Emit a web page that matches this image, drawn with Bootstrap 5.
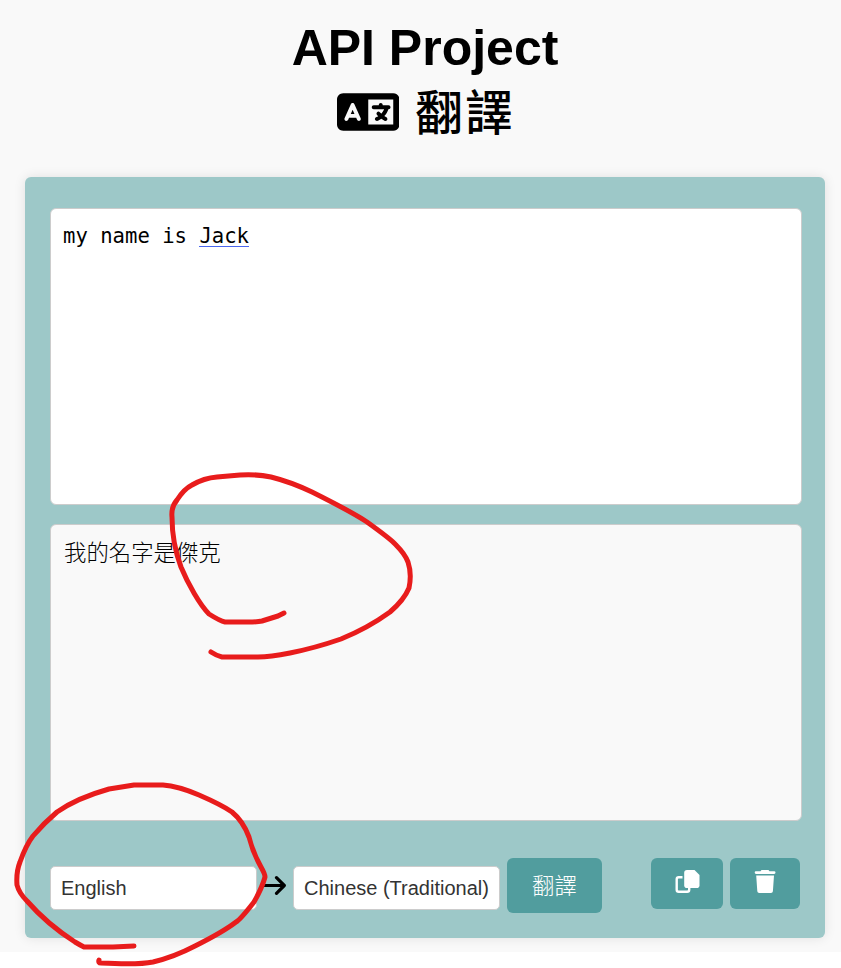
<!DOCTYPE html>
<html lang="zh-Hant">
<head>
<meta charset="utf-8">
<meta name="viewport" content="width=device-width, initial-scale=1">
<title>API Project 翻譯</title>
<link href="https://cdn.jsdelivr.net/npm/bootstrap@5.3.0/dist/css/bootstrap.min.css" rel="stylesheet">
<style>
body { min-height: 968px; background: #fff; color: #000; font-family: "Liberation Sans", "Noto Sans CJK TC", sans-serif; }
.page { height: 952px; padding: 16px 16px 0 25px; background: #f9f9f9; }
.title { font-size: 50px; line-height: 64px; font-weight: 700; height: 161px; color: #000; }
.title-zh { font: 500 47.5px/60px "Noto Sans CJK TC", sans-serif; letter-spacing: 2.5px; margin-left: 16px; padding-bottom: 4px; margin-right: -2px; }
.lang-icon { width: 62.5px; height: 50px; }
.panel { height: 761px; padding: 31px 23px 0 25px; background: #9dc8c8; border-radius: 6px; box-shadow: 0 0 12px rgba(0,0,0,.1); }
.pane { height: 297px; margin-bottom: 19px; padding: 12px; border: 1px solid #ccc; border-radius: 6px; }
.source { background: #fff; font: 20.6px/30px "DejaVu Sans Mono", monospace; }
.result { padding: 10.5px 13px; background: #f9f9f9; font: 300 22.4px/30px "Noto Sans CJK TC", sans-serif; }
.name { border-bottom: 1.500px solid #4a66ee; display: inline-block; line-height: 20px; }
.controls { margin-top: 37px; padding-right: 2px; }
.lang { width: 207px; height: 44px; margin-top: 8px; padding-left: 10px; font-size: 20px; color: #333; background: #fff; border: 1px solid #ccc; border-radius: 5px; }
.arrow { width: 22px; height: 25px; margin: 15px 7px 0 7px; }
.act { background: #519d9e; color: #fff; border: 0; border-radius: 6px; }
.act:hover { background: #458b8c; color: #fff; }
.translate { width: 95px; height: 55px; margin-left: 7px; font: 300 22.4px/30px "Noto Sans CJK TC", sans-serif; }
.translate span { display: block; padding-bottom: 3px; }
.copy { width: 72px; height: 51px; margin-right: 7px; }
.trash { width: 70px; height: 51px; }
.copy svg, .trash svg { margin-bottom: 3px; }
.marks { z-index: 5; pointer-events: none; }
</style>
<script src="https://cdn.jsdelivr.net/npm/bootstrap@5.3.0/dist/js/bootstrap.bundle.min.js"></script>
</head>
<body class="position-relative">
<main class="page">
  <h1 class="title text-center mb-0">
    <span class="d-block">API Project</span>
    <span class="d-flex justify-content-center align-items-center">
      <svg class="lang-icon" viewBox="0 0 640 512"><path d="M0 128C0 92.7 28.7 64 64 64H576c35.300 0 64 28.700 64 64V384c0 35.300-28.700 64-64 64H64c-35.300 0-64-28.700-64-64V128zm320 0V384H576V128H320zM178.300 175.900c-3.200-7.200-10.400-11.900-18.300-11.900s-15.100 4.700-18.300 11.900l-64 144c-4.500 10.100 .1 21.900 10.200 26.400s21.900-.1 26.400-10.200l8.900-20.100h73.600l8.900 20.100c4.500 10.100 16.300 14.600 26.400 10.200s14.600-16.300 10.200-26.400l-64-144zM160 233.200L179 276H141l19-42.800zM448 164c11 0 20 9 20 20v4h44 16c11 0 20 9 20 20s-9 20-20 20h-2l-1.600 4.500c-8.900 24.400-22.400 46.600-39.600 65.400c.9 .6 1.800 1.100 2.700 1.600l18.900 11.300c9.500 5.700 12.500 18 6.900 27.400s-18 12.500-27.400 6.900l-18.900-11.300c-4.500-2.700-8.800-5.500-13.100-8.500c-10.600 7.500-21.900 14-34 19.400l-3.600 1.600c-10.100 4.500-21.900-.1-26.400-10.200s.1-21.900 10.200-26.400l3.600-1.600c6.400-2.900 12.600-6.100 18.500-9.800l-12.200-12.200c-7.800-7.800-7.800-20.500 0-28.300s20.500-7.800 28.300 0l14.600 14.600 .5 .5c12.400-13.100 22.500-28.300 29.800-45H376c-11 0-20-9-20-20s9-20 20-20h52v-4c0-11 9-20 20-20z"/></svg>
      <span class="title-zh">翻譯</span>
    </span>
  </h1>
  <section class="panel">
    <div class="pane source">my name is <span class="name">Jack</span></div>
    <div class="pane result">我的名字是傑克</div>
    <div class="controls d-flex align-items-start">
      <div class="lang d-flex align-items-center">English</div>
      <svg class="arrow" viewBox="0 0 22 25" fill="none" stroke="#000" stroke-width="3.200" stroke-linecap="round" stroke-linejoin="round"><path d="M0.500 12.500H20M12.500 4.700L20.300 12.500L12.500 20.300"/></svg>
      <div class="lang d-flex align-items-center">Chinese (Traditional)</div>
      <button class="btn act translate p-0" type="button"><span>翻譯</span></button>
      <button class="btn act copy ms-auto p-0 d-flex align-items-center justify-content-center" type="button" aria-label="Copy">
        <svg width="26" height="26" viewBox="0 0 26 26"><path d="M8.500 8.200H4.700Q2.700 8.200 2.700 10.200V20.800Q2.700 22.800 4.700 22.800H13.200Q15.200 22.800 15.200 20.800V19" fill="none" stroke="#fff" stroke-width="2.400"/><path d="M13 1H20.500L25.500 6V16.200Q25.500 19 22.700 19H13Q10.200 19 10.200 16.200V3.800Q10.200 1 13 1Z" fill="#fff"/></svg>
      </button>
      <button class="btn act trash p-0 d-flex align-items-center justify-content-center" type="button" aria-label="Delete">
        <svg width="22" height="26" viewBox="0 0 22 26" fill="#fff"><path d="M7.500 1H14.500L15.500 2.300H20.200Q21.500 2.300 21.500 3.600T20.200 5H2Q0.700 5 0.700 3.600T2 2.300H6.500ZM2.200 6.500H20L18.900 22.300Q18.700 24 17 24H5.200Q3.500 24 3.300 22.300Z"/></svg>
      </button>
    </div>
  </section>
</main>
<svg class="marks position-absolute top-0 start-0" width="841" height="968" viewBox="0 0 841 968" fill="none" stroke="#e81c1c" stroke-width="5" stroke-linecap="round" stroke-linejoin="round">
  <path d="M284 613L278 616L262 621Q258 622 248 622H225Q220 621 209 614C200 605 188 584 181 567Q172 543 172 517Q171 507 177 500Q184 489 192 485Q204 478 217 477L240 475Q257 474 271 477Q291 482 312 492Q352 512 367 522Q392 540 396 545Q405 554 408 562Q412 574 409 588Q404 600 390 612Q368 628 341 639Q315 648 290 653Q270 657 258 657H222Q217 656 211 652"/>
  <path d="M134 946L113 947H84Q80 945 75 942Q47 924 27 901Q19 893 17 885Q16 872 20 862Q26 845 33 836Q44 823 57 812Q77 798 109 789L134 785H163Q178 786 199 795Q222 805 232 812Q243 821 249 837Q253 853 261 867Q265 874 265 877Q262 888 254 902Q240 920 236 922Q223 932 195 946Q174 957 153 962Q138 965 101 963Q98 963 99 960"/>
</svg>
</body>
</html>
